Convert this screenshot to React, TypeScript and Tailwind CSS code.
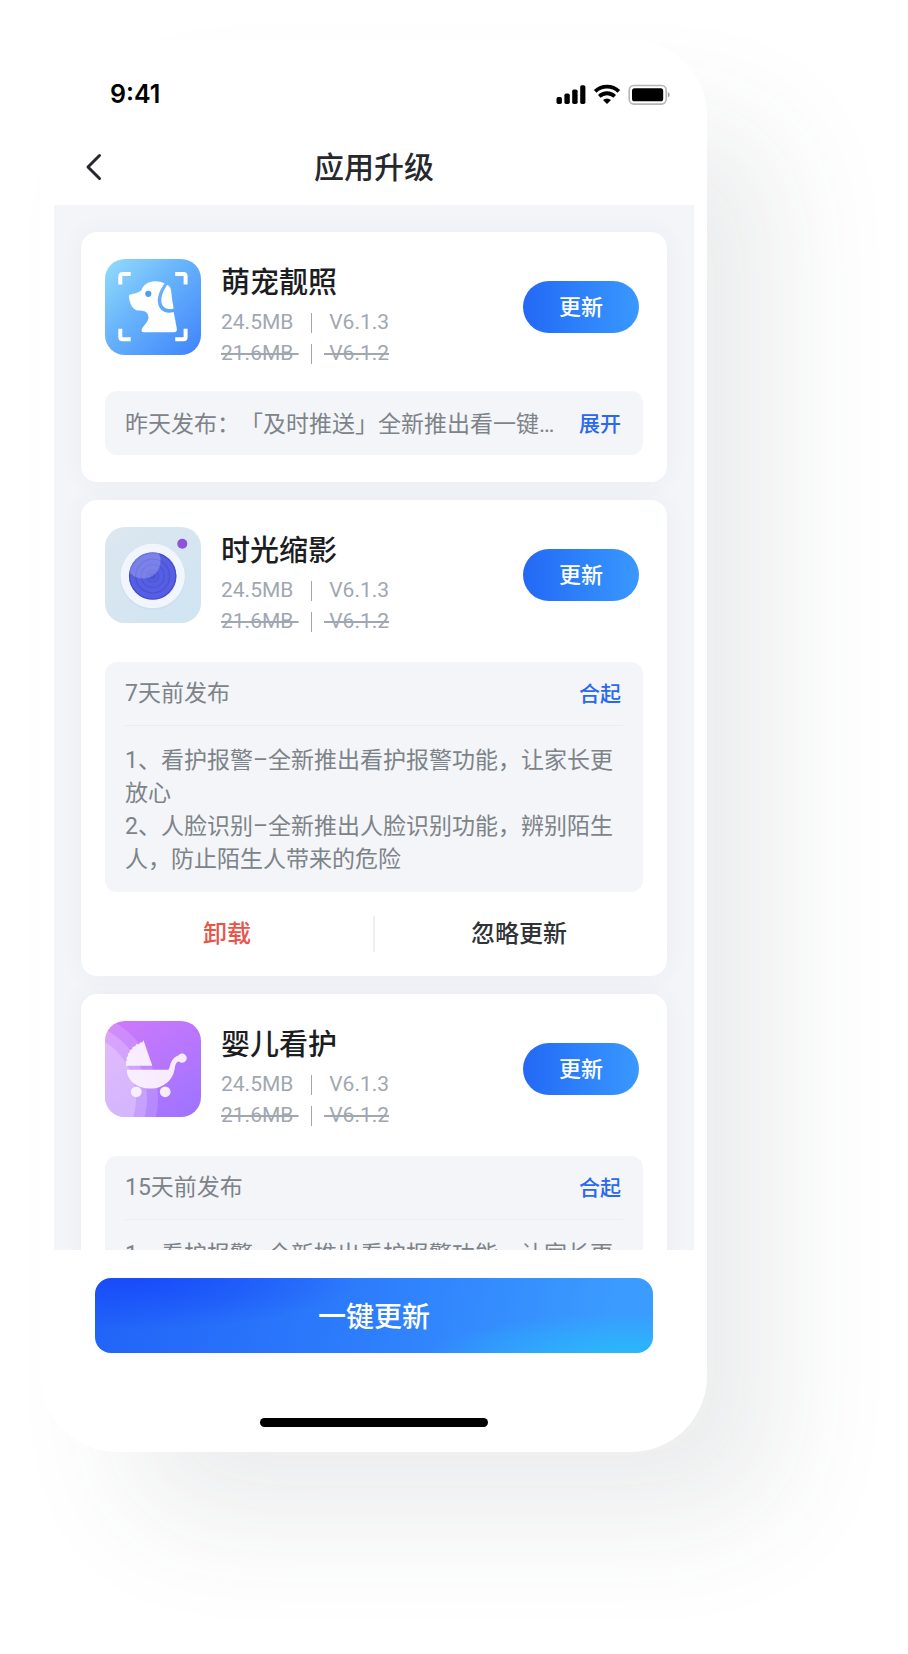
import { useState, type ReactElement } from 'react';

interface AppEntry {
    readonly id: string;
    readonly name: string;
    readonly published: string;
    readonly summary?: string;
    readonly notes: readonly string[];
    readonly icon: () => ReactElement;
}

const NOTES = [
    '1、看护报警–全新推出看护报警功能，让家长更放心',
    '2、人脸识别–全新推出人脸识别功能，辨别陌生人，防止陌生人带来的危险',
];

const APPS: readonly AppEntry[] = [
    {
        id: 'pet',
        name: '萌宠靓照',
        published: '昨天发布',
        summary: '昨天发布：「及时推送」全新推出看一键…',
        notes: NOTES,
        icon: PetIcon,
    },
    { id: 'lapse', name: '时光缩影', published: '7天前发布', notes: NOTES, icon: CameraIcon },
    { id: 'baby', name: '婴儿看护', published: '15天前发布', notes: NOTES, icon: StrollerIcon },
];

function PetIcon() {
    return (
        <svg viewBox="0 0 96 96" className="size-24 shrink-0" aria-hidden="true">
            <defs>
                <linearGradient id="pet-bg" x1="0" y1="0" x2="1" y2="1">
                    <stop offset="0" stopColor="#94dcfb" />
                    <stop offset="0.45" stopColor="#66b2fb" />
                    <stop offset="1" stopColor="#3f83fc" />
                </linearGradient>
            </defs>
            <rect width="96" height="96" rx="20" fill="url(#pet-bg)" />
            <path
                d="M15.3 25.5V17a2 2 0 0 1 2-2h8.4M70.2 15h8.4a2 2 0 0 1 2 2v8.5M80.6 69.7v8.5a2 2 0 0 1-2 2h-8.4M25.7 80.2h-8.4a2 2 0 0 1-2-2v-8.5"
                fill="none"
                stroke="#fff"
                strokeWidth="4"
            />
            <path
                d="M25 35.5C29 34.5 34.5 34 36.8 30.5C38.5 26 43 22.3 50 22.3C53.5 22.3 57 23 59.7 24.5C54.5 31 52 38.5 53 44C54 51 60 55.5 68.7 53L71.8 69.5C72.2 72 71.2 73.2 69 73.2H39C36.5 73.2 36 71.5 37 69.7C39 66 43.5 62.5 43.5 58.5C43.5 55.5 42 53.5 39.5 52.3C36 51.2 32 52.5 29 49.7C26.3 47.5 24.6 43 24 38.5C23.8 36.7 24 35.9 25 35.5Z"
                fill="#fff"
            />
            <path
                d="M62.3 25.8C64.8 27 66 29.5 66.3 33C66.7 38.5 67.6 43 68.5 48.5C68.6 49.5 68 50 67 50.1C61.5 50.5 57.4 48.5 56.5 43.5C55.6 38 58.5 31 62.3 25.8Z"
                fill="#fff"
            />
            <circle cx="43.3" cy="34.8" r="3.1" fill="#4f9ff0" />
        </svg>
    );
}

function CameraIcon() {
    return (
        <svg viewBox="0 0 96 96" className="size-24 shrink-0" aria-hidden="true">
            <defs>
                <linearGradient id="cam-bg" x1="0" y1="0" x2="1" y2="1">
                    <stop offset="0" stopColor="#dde7ee" />
                    <stop offset="1" stopColor="#cfe4f3" />
                </linearGradient>
                <clipPath id="cam-lens">
                    <circle cx="47.7" cy="49" r="23.8" />
                </clipPath>
            </defs>
            <rect width="96" height="96" rx="20" fill="url(#cam-bg)" />
            <circle cx="47.7" cy="50" r="33" fill="#c3d8ea" opacity="0.4" />
            <circle cx="47.7" cy="49" r="32.2" fill="#f1f6fe" />
            <circle cx="47.7" cy="49" r="23.8" fill="#565ee4" />
            <g fill="none" stroke="#4249c4" strokeWidth="1.2">
                <circle cx="47.7" cy="49" r="23" opacity="0.8" />
                <circle cx="47.7" cy="49" r="17" opacity="0.6" />
                <circle cx="47.7" cy="49" r="11.5" opacity="0.5" />
                <circle cx="47.7" cy="49" r="6" opacity="0.5" />
            </g>
            <circle cx="47.7" cy="49" r="3.5" fill="#4249c4" opacity="0.5" />
            <circle cx="38" cy="34" r="17.6" fill="#fff" opacity="0.22" clipPath="url(#cam-lens)" />
            <circle cx="77.3" cy="16.8" r="5" fill="#8f52d9" />
        </svg>
    );
}

function StrollerIcon() {
    return (
        <svg viewBox="0 0 96 96" className="size-24 shrink-0" aria-hidden="true">
            <defs>
                <linearGradient id="baby-bg" x1="0.2" y1="0" x2="0.8" y2="1">
                    <stop offset="0" stopColor="#cb78fb" />
                    <stop offset="1" stopColor="#a074ff" />
                </linearGradient>
                <clipPath id="baby-clip">
                    <rect width="96" height="96" rx="20" />
                </clipPath>
            </defs>
            <g clipPath="url(#baby-clip)">
                <rect width="96" height="96" fill="url(#baby-bg)" />
                <g fill="#fff">
                    <circle cx="-35" cy="77" r="88" opacity="0.15" />
                    <circle cx="-35" cy="77" r="77" opacity="0.2" />
                    <circle cx="-35" cy="77" r="66" opacity="0.24" />
                </g>
            </g>
            <g fill="#faf3ff" opacity="0.95">
                <path d="M38.5 19.3L47.3 44.7H20.6C21.6 43.6 21.6 42.3 20.5 41C22 39.8 22.3 38.3 21.2 36.7C22.9 35.8 23.5 34.5 22.6 32.7C24.5 32.2 25.3 30.9 24.8 29C26.8 28.8 27.8 27.7 27.7 25.7C29.7 26 30.9 25.1 31.2 23.1C33.1 23.8 34.4 23.2 35.1 21.2C36.6 22 37.7 21.3 38.5 19.3Z" />
                <path d="M21.7 48.7H63.5C65 46.5 65 43 66.5 40.5C68.4 37.3 70.8 35.3 73.3 34.5A4.6 4.6 0 1 1 74 40.5C71.5 40.6 70.5 43 69.9 46C68.8 58.5 59 67.6 45.5 67.6C32.5 67.6 22 59.5 21.7 48.7Z" />
                <circle cx="31.3" cy="70.8" r="5.4" />
                <circle cx="60.2" cy="70.8" r="5.4" />
            </g>
        </svg>
    );
}

function StatusIcons() {
    return (
        <svg viewBox="0 0 114 22" className="h-[22px] w-[114px]" aria-hidden="true">
            <rect x="0.5" y="13" width="5.4" height="7" rx="1.7" />
            <rect x="8.4" y="9.5" width="5.4" height="10.5" rx="1.7" />
            <rect x="16.2" y="5.5" width="5.4" height="14.5" rx="1.7" />
            <rect x="24.2" y="1.3" width="5.2" height="18.7" rx="1.7" />
            <g fill="none" stroke="#000" strokeWidth="3.8">
                <path d="M39.2 7.3A17.2 17.2 0 0 1 62.8 7.3" />
                <path d="M43.3 12.3A11.2 11.2 0 0 1 58.7 12.3" />
            </g>
            <path d="M47 16Q51 13 55 16L51 20Z" />
            <rect x="73.2" y="1.5" width="37" height="18.6" rx="4.8" fill="none" stroke="#b5b5b5" strokeWidth="1.6" />
            <rect x="76" y="4.3" width="31.2" height="13" rx="2.6" />
            <path d="M111.8 8Q113.8 9 113.8 10.8Q113.8 12.6 111.8 13.6Z" fill="#a0a0a0" />
        </svg>
    );
}

function VersionRow({ size, version, old = false }: { size: string; version: string; old?: boolean }) {
    const strike = old ? 'line-through' : '';
    return (
        <p className="flex h-[31px] items-center text-[21px] text-[#a1a7b0]">
            <span className={`w-[78px] whitespace-pre ${strike}`}>{size + ' '}</span>
            <span className="mx-3 h-5 w-px bg-[#a1a7b0]" />
            <span className={`whitespace-pre ${strike}`}>{' ' + version}</span>
        </p>
    );
}

function AppCard({ app }: { app: AppEntry }) {
    const [open, setOpen] = useState(!app.summary);
    const Icon = app.icon;
    return (
        <li className="rounded-2xl bg-white px-6 pt-[27px] shadow-[0_0_24px_rgba(60,70,100,0.05)]">
            <div className="flex items-start">
                <Icon />
                <div className="ml-5 min-w-0 flex-1">
                    <h2 className="py-0.5 text-[29px] leading-[44px] font-medium text-[#1c1d1f]">{app.name}</h2>
                    <VersionRow size="24.5MB" version="V6.1.3" />
                    <VersionRow size="21.6MB" version="V6.1.2" old />
                </div>
                <button
                    type="button"
                    className="mt-[22px] mr-1 h-[52px] w-[116px] rounded-full bg-linear-to-r from-[#2468f5] to-[#3a98ff] text-[22px] font-medium text-white"
                >
                    更新
                </button>
            </div>

            {open ? (
                <>
                    <div className="mt-[25px] rounded-xl bg-[#f3f5f9] px-5 pb-4 text-[23px] text-[#7d8388]">
                        <div className="flex h-16 items-center justify-between border-b border-[#ebedf1] pt-0.5">
                            <span>{app.published}</span>
                            <button
                                type="button"
                                onClick={() => setOpen(false)}
                                className="mr-0.5 text-[21px] font-medium text-[#2a68ee]"
                            >
                                合起
                            </button>
                        </div>
                        <div className="pt-[18px] leading-[33px]">
                            {app.notes.map((note) => (
                                <p key={note}>{note}</p>
                            ))}
                        </div>
                    </div>
                    <div className="grid h-[84px] grid-cols-[1fr_auto_1fr] items-center text-2xl font-medium">
                        <button type="button" className="h-full pr-6 text-[#ea5348]">
                            卸载
                        </button>
                        <span className="h-9 w-0.5 bg-[#eceef1]" />
                        <button type="button" className="h-full pl-5 text-[#303236]">
                            忽略更新
                        </button>
                    </div>
                </>
            ) : (
                <div className="pt-[22px] pb-[27px]">
                    <div className="flex h-16 items-center rounded-xl bg-[#f3f5f9] px-5 pt-1 text-[23px] text-[#7d8388]">
                        <p className="min-w-0 flex-1 truncate [text-spacing-trim:space-all]">
                            {app.summary ?? app.published}
                        </p>
                        <button
                            type="button"
                            onClick={() => setOpen(true)}
                            className="mr-0.5 ml-3 text-[21px] font-medium text-[#2a68ee]"
                        >
                            展开
                        </button>
                    </div>
                </div>
            )}
        </li>
    );
}

export default function App() {
    return (
        <div className="flex h-screen flex-col overflow-hidden bg-white pt-10 pr-[201px] pb-[202px] pl-[41px] font-[Roboto,'Noto_Sans_CJK_SC',sans-serif]">
            <main className="flex min-h-0 flex-1 flex-col rounded-[76px] bg-white p-[13px] shadow-[80px_76px_120px_-10px_rgba(60,72,76,0.1)]">
                <div className="flex h-20 shrink-0 items-center justify-between pt-1 pr-6 pl-14">
                    <span className="font-[Inter,sans-serif] text-[25px] font-semibold text-black">9:41</span>
                    <StatusIcons />
                </div>
                <header className="grid h-[72px] shrink-0 grid-cols-[1fr_auto_1fr] items-center pb-1">
                    <button type="button" aria-label="返回" className="w-12 pl-[31px]">
                        <svg viewBox="0 0 17 28" className="h-7 w-[17px]" aria-hidden="true">
                            <path
                                d="M14.5 2.5L3 14L14.5 25.5"
                                fill="none"
                                stroke="#26282c"
                                strokeWidth="3"
                                strokeLinecap="round"
                                strokeLinejoin="round"
                            />
                        </svg>
                    </button>
                    <h1 className="text-[30px] font-medium text-[#26282c]">应用升级</h1>
                </header>

                <ul className="flex min-h-0 flex-1 flex-col gap-[18px] overflow-hidden bg-[#f3f5f9] p-[27px] *:shrink-0">
                    {APPS.map((app) => (
                        <AppCard key={app.id} app={app} />
                    ))}
                </ul>

                <footer className="flex shrink-0 flex-col items-center px-[41px] pt-7">
                    <button
                        type="button"
                        className="h-[75px] w-full rounded-2xl bg-[radial-gradient(ellipse_42%_70%_at_5%_0%,#194dfa_10%,transparent),radial-gradient(ellipse_38%_65%_at_97%_110%,#29b9fa_10%,transparent),linear-gradient(100deg,#2163f8,#2d7dfc_48%,#3b9bff_92%)] pt-1 text-[28px] font-medium text-white"
                    >
                        一键更新
                    </button>
                    <span className="mt-[65px] mb-3 h-[9px] w-[228px] rounded-full bg-black" />
                </footer>
            </main>
        </div>
    );
}
